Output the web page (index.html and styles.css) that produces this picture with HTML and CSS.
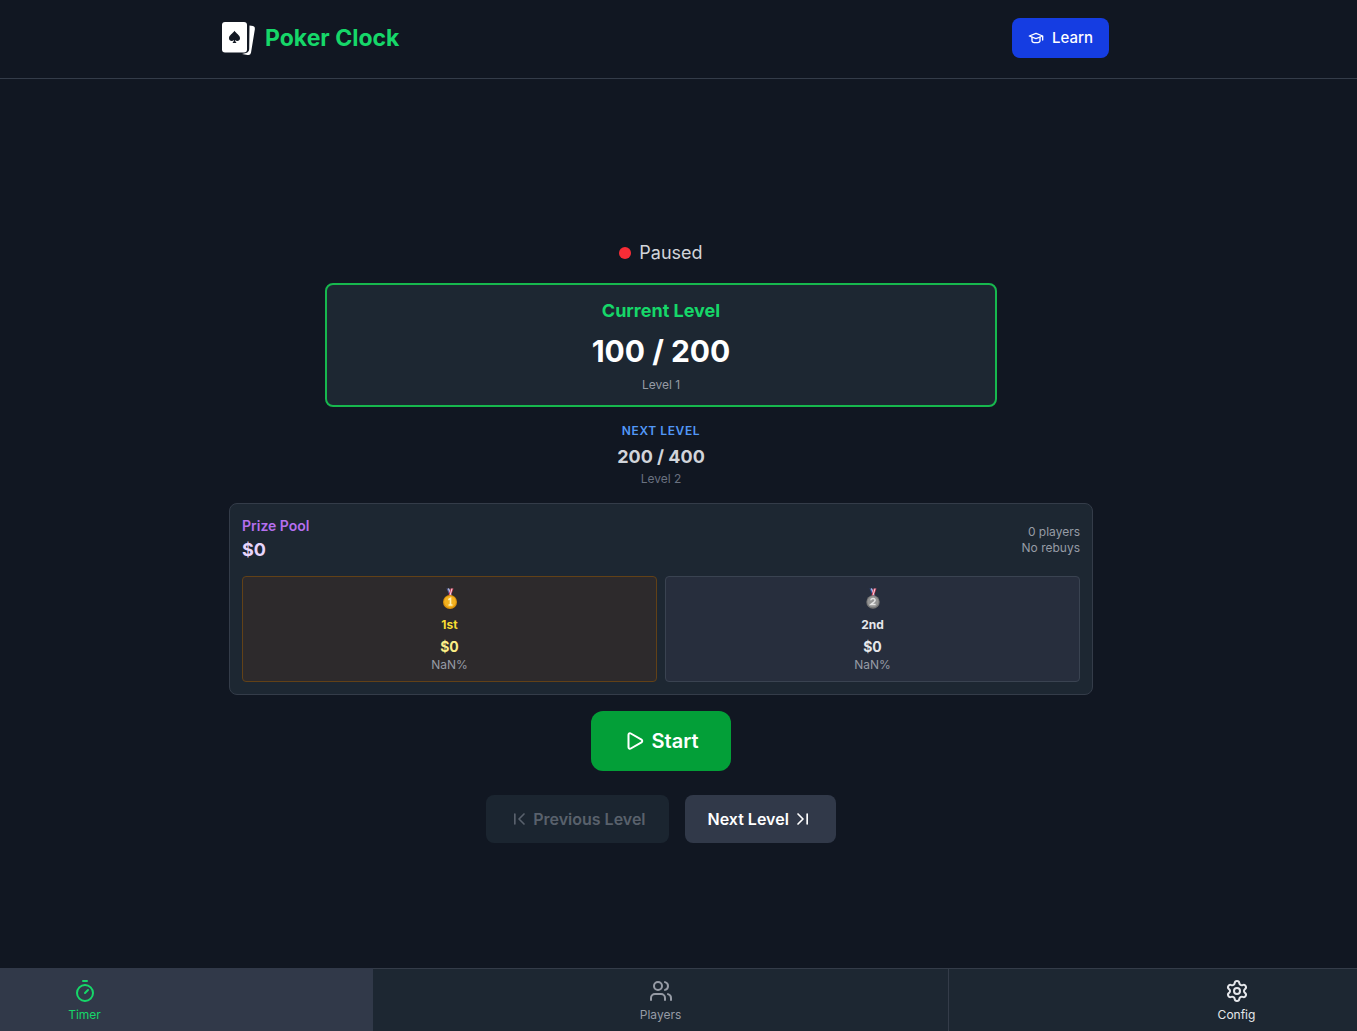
FILE: index.html
```html
<!DOCTYPE html>
<html lang="en">
<head>
<meta charset="utf-8">
<meta name="viewport" content="width=device-width, initial-scale=1">
<title>Poker Clock</title>
<link rel="stylesheet" href="styles.css">
</head>
<body>
<header class="header">
  <div class="header-inner">
    <div class="brand">
      <svg class="brand-icon" viewBox="0 -1 36 36" aria-hidden="true">
        <path d="M28.500 4.500L32 5.100Q34.300 5.600 33.900 7.900L30 31.700Q29.400 34.600 26.600 34L21 33L25 32Q28 31.200 28.200 28Z" fill="#fff"/>
        <rect x="1" y="1" width="25" height="30.500" rx="3" fill="#fff"/>
        <path d="M13.500 9.700C12 12.300 8 14 8 17.200C8 20.200 11.500 20.800 13 18.900C12.900 20 12.500 20.600 11.700 21.400V22H15.300V21.400C14.500 20.600 14.100 20 14 18.900C15.500 20.800 19 20.200 19 17.200C19 14 15 12.300 13.500 9.700Z" fill="#111722"/>
      </svg>
      <h1 class="brand-name">Poker Clock</h1>
    </div>
    <button class="learn" type="button">
      <svg class="icon icon-16" viewBox="0 0 24 24" aria-hidden="true"><path d="M22 9l-10-4-10 4 10 4 10-4v6"/><path d="M6 10.600V16a6 3 0 0 0 12 0v-5.400"/></svg>
      Learn
    </button>
  </div>
</header>

<main class="main">
  <div class="status"><span class="dot"></span>Paused</div>

  <section class="current">
    <h2 class="current-title">Current Level</h2>
    <div class="current-blinds">100 / 200</div>
    <div class="caption">Level 1</div>
  </section>

  <section class="next">
    <h3 class="next-title">NEXT LEVEL</h3>
    <div class="next-blinds">200 / 400</div>
    <div class="caption caption-dim">Level 2</div>
  </section>

  <section class="prize">
    <div class="prize-head">
      <div>
        <h3 class="prize-title">Prize Pool</h3>
        <div class="prize-total">$0</div>
      </div>
      <div class="prize-meta"><div>0 players</div><div>No rebuys</div></div>
    </div>
    <div class="places">
      <div class="place gold">
        <svg class="medal" viewBox="0 0 20 28" role="img" aria-label="Gold medal">
          <path d="M6.500 3.500h3l2.500 7-2 1z" fill="#5560a0"/><path d="M8 3.500h1l2.500 7h-1z" fill="#e8e8f0"/>
          <path d="M13.500 3.500h-3l-2 7 2 1z" fill="#d8405c"/><path d="M12.500 3.500h-1l-2 7h1z" fill="#f0dce6"/>
          <circle cx="10" cy="17" r="7" fill="#dc930c"/><circle cx="10" cy="16.700" r="5.800" fill="#f3b220"/>
          <path d="M8.300 14.700l2.200-1.300v6.600M8.500 20h4" fill="none" stroke="#fff0b5" stroke-width="1.600"/>
        </svg>
        <div class="place-name">1st</div>
        <div class="place-amount">$0</div>
        <div class="caption">NaN%</div>
      </div>
      <div class="place silver">
        <svg class="medal" viewBox="0 0 20 28" role="img" aria-label="Silver medal">
          <path d="M6.500 3.500h3l2.500 7-2 1z" fill="#3855a0"/><path d="M8 3.500h1l2.500 7h-1z" fill="#e8e8f0"/>
          <path d="M13.500 3.500h-3l-2 7 2 1z" fill="#d8405c"/><path d="M12.500 3.500h-1l-2 7h1z" fill="#f0dce6"/>
          <circle cx="10" cy="17" r="6.700" fill="#747474"/><circle cx="10" cy="16.700" r="5.600" fill="#949494"/>
          <path d="M7.800 15.200c.2-2.600 4.600-2.300 4.300.2-.2 1.500-2.600 2.600-4.300 4.200h4.800" fill="none" stroke="#e4e4e4" stroke-width="1.500"/>
        </svg>
        <div class="place-name">2nd</div>
        <div class="place-amount">$0</div>
        <div class="caption">NaN%</div>
      </div>
    </div>
  </section>

  <button class="start" type="button">
    <svg class="icon icon-24" viewBox="0 0 24 24" aria-hidden="true"><path d="M5.500 5.800v12.400c0 1.200 1.300 1.900 2.300 1.300l10.700-6.200a1.500 1.500 0 0 0 0-2.600L7.800 4.500c-1-.6-2.300.1-2.300 1.300z"/></svg>
    Start
  </button>

  <div class="steps">
    <button class="step" type="button" disabled>
      <svg class="icon icon-20" viewBox="0 0 24 24" aria-hidden="true"><path d="M7 6v12M18 6l-6 6 6 6"/></svg>
      Previous Level
    </button>
    <button class="step" type="button">
      Next Level
      <svg class="icon icon-20" viewBox="0 0 24 24" aria-hidden="true"><path d="M6 6l6 6-6 6M17 6v12"/></svg>
    </button>
  </div>
</main>

<nav class="tabbar">
  <div class="tabs">
    <a class="tab tab-active" href="#timer">
      <svg class="icon icon-24" viewBox="0 0 24 24" aria-hidden="true"><path d="M10 2h4M12 14l3-3"/><circle cx="12" cy="14" r="8"/></svg>
      Timer
    </a>
    <a class="tab" href="#players">
      <svg class="icon icon-24" viewBox="0 0 24 24" aria-hidden="true"><circle cx="9" cy="7" r="4"/><path d="M2 21v-2a4 4 0 0 1 4-4h6a4 4 0 0 1 4 4v2M16 3.130a4 4 0 0 1 0 7.750M22 21v-2a4 4 0 0 0-3-3.870"/></svg>
      Players
    </a>
    <a class="tab tab-bright" href="#config">
      <svg class="icon icon-24" viewBox="0 0 24 24" aria-hidden="true"><path d="M9.670 4.140a2.340 2.340 0 0 1 4.660 0 2.340 2.340 0 0 0 3.320 1.910 2.340 2.340 0 0 1 2.330 4.030 2.340 2.340 0 0 0 0 3.840 2.340 2.340 0 0 1-2.330 4.030 2.340 2.340 0 0 0-3.320 1.910 2.340 2.340 0 0 1-4.660 0 2.340 2.340 0 0 0-3.320-1.910 2.340 2.340 0 0 1-2.330-4.030 2.340 2.340 0 0 0 0-3.840 2.340 2.340 0 0 1 2.330-4.030 2.340 2.340 0 0 0 3.320-1.910"/><circle cx="12" cy="12" r="3"/></svg>
      Config
    </a>
  </div>
</nav>
</body>
</html>
```

FILE: styles.css
```css
:root {
  --bg: #111722;
  --panel: #1d2732;
  --raised: #313949;
  --line: #343c49;
  --muted: #969ba5;
  --green: #16d769;
  --shift: 35px;
}

* { box-sizing: border-box; }

body {
  margin: 0;
  min-height: 100vh;
  display: flex;
  flex-direction: column;
  background: var(--bg);
  color: #fff;
  font-family: Inter, "Liberation Sans", sans-serif;
  font-size: 16px;
  line-height: 24px;
}

h1, h2, h3 { margin: 0; }

button {
  display: flex;
  align-items: center;
  border: 0;
  color: #fff;
  font: inherit;
  cursor: pointer;
}

.icon {
  flex: none;
  fill: none;
  stroke: currentColor;
  stroke-width: 2;
  stroke-linecap: round;
  stroke-linejoin: round;
}
.icon-16 { width: 16px; height: 16px; }
.icon-20 { width: 20px; height: 20px; }
.icon-24 { width: 24px; height: 24px; }

.header {
  padding: 18px var(--shift) 20px 0;
  border-bottom: 1px solid var(--line);
}
.header-inner {
  display: flex;
  align-items: center;
  justify-content: space-between;
  max-width: 896px;
  margin: 0 auto;
  padding-left: 8px;
}
.brand { display: flex; align-items: center; gap: 8px; }
.brand-icon { width: 36px; height: 36px; }
.brand-name {
  color: var(--green);
  font-size: 23px;
  line-height: 32px;
  font-weight: 700;
}
.learn {
  gap: 8px;
  padding: 8px 16px;
  border-radius: 8px;
  background: #153de2;
  font-size: 15px;
  font-weight: 500;
}

.main {
  flex: 1;
  display: flex;
  flex-direction: column;
  align-items: center;
  justify-content: center;
  gap: 16px;
  padding: 34px calc(var(--shift) + 16px) 0 16px;
}

.status {
  display: flex;
  align-items: center;
  gap: 8px;
  color: #d1d4da;
  font-size: 18px;
  line-height: 28px;
}
.dot { width: 12px; height: 12px; border-radius: 50%; background: #f92c36; }

.caption { color: var(--muted); font-size: 12px; line-height: 16px; }
.caption-dim { color: #6a7180; }

.current {
  display: flex;
  flex-direction: column;
  gap: 8px;
  width: 100%;
  max-width: 672px;
  padding: 12px;
  border: 2px solid #17b84e;
  border-radius: 8px;
  background: var(--panel);
  text-align: center;
}
.current-title {
  color: var(--green);
  font-size: 18px;
  line-height: 28px;
  font-weight: 700;
}
.current-blinds { font-size: 30px; line-height: 36px; font-weight: 700; }

.next { text-align: center; }
.next-title {
  margin-bottom: 4px;
  color: #5298f8;
  font-size: 12px;
  line-height: 16px;
  font-weight: 600;
  letter-spacing: 0.05em;
}
.next-blinds {
  color: #d1d4da;
  font-size: 18px;
  line-height: 28px;
  font-weight: 700;
}

.prize {
  display: flex;
  flex-direction: column;
  gap: 12px;
  width: 100%;
  max-width: 864px;
  padding: 12px;
  border: 1px solid var(--line);
  border-radius: 8px;
  background: var(--panel);
}
.prize-head { display: flex; align-items: center; justify-content: space-between; }
.prize-title { color: #b56fef; font-size: 14px; line-height: 20px; font-weight: 600; }
.prize-total { color: #e8d5fc; font-size: 18px; line-height: 28px; font-weight: 700; }
.prize-meta { color: var(--muted); font-size: 12px; line-height: 16px; text-align: right; }

.places { display: grid; grid-template-columns: 1fr 1fr; gap: 8px; }
.place {
  display: flex;
  flex-direction: column;
  align-items: center;
  padding: 8px;
  border: 1px solid;
  border-radius: 4px;
}
.gold { border-color: #624117; background: #2d2a2c; }
.silver { border-color: #3a4351; background: #272e3d; }
.medal { width: 20px; height: 28px; margin-bottom: 4px; }
.place-name { margin-bottom: 4px; font-size: 12px; line-height: 16px; font-weight: 700; }
.place-amount { font-size: 14px; line-height: 20px; font-weight: 700; }
.gold .place-name { color: #f7dc32; }
.gold .place-amount { color: #fbee86; }
.silver .place-name, .silver .place-amount { color: #e5e7eb; }

.start {
  gap: 4px;
  padding: 16px 32px;
  border-radius: 12px;
  background: #039f38;
  font-size: 20px;
  line-height: 28px;
  font-weight: 600;
}

.steps { display: flex; gap: 16px; margin-top: 8px; }
.step {
  gap: 4px;
  padding: 12px 23px;
  border-radius: 8px;
  background: var(--raised);
  font-weight: 600;
}
.step:disabled { background: #1b2530; color: #59616c; cursor: default; }

/* The tab row bleeds past both window edges, centred on the main column. */
.tabbar { overflow: hidden; background: var(--panel); }
.tabs {
  display: grid;
  grid-template-columns: repeat(3, 1fr);
  margin: 0 calc(var(--shift) - 203px) 0 -203px;
}
.tab {
  display: flex;
  flex-direction: column;
  align-items: center;
  gap: 4px;
  padding: 10px 0 8px;
  border-top: 1px solid var(--line);
  border-right: 1px solid var(--line);
  color: var(--muted);
  font-size: 12px;
  line-height: 16px;
  text-decoration: none;
}
.tab-active { border-color: var(--raised); background: var(--raised); color: var(--green); }
.tab-bright { color: #e5e7eb; }
```
